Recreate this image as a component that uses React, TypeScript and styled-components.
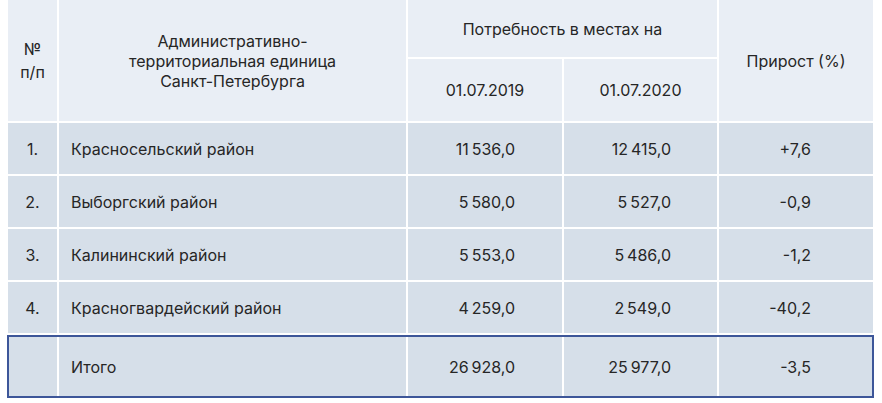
import React from "react";
import styled, { createGlobalStyle } from "styled-components";

const Global = createGlobalStyle`
  *, *::before, *::after { box-sizing: border-box; }
  html, body { margin: 0; padding: 0; background: #ffffff; }
  body { font-family: "Inter", "Noto Sans", Arial, sans-serif; }
`;

const COLS = "49px 347px 154px 153px 154px";

const Page = styled.div`
  padding: 0 0 0 8px;
  width: 873px;
`;

const Table = styled.div`
  display: flex;
  flex-direction: column;
  gap: 2px;
`;

const Head = styled.div`
  display: grid;
  grid-template-columns: ${COLS};
  grid-template-rows: 57px 62px;
  gap: 2px;
`;

const HeadCell = styled.div<{ $col: string; $row: string; $lh?: number }>`
  grid-column: ${(p) => p.$col};
  grid-row: ${(p) => p.$row};
  background: #e9eef5;
  color: #262626;
  font-family: "Inter", sans-serif;
  font-size: 16px;
  line-height: ${(p) => p.$lh ?? 20}px;
  display: flex;
  align-items: center;
  justify-content: center;
  text-align: center;
`;

const Row = styled.div<{ $h: number }>`
  display: grid;
  grid-template-columns: ${COLS};
  height: ${(p) => p.$h}px;
  column-gap: 2px;
`;

const TotalRow = styled(Row)`
  grid-template-columns: 48px 347px 154px 153px 153px;
  width: 867px;
  margin-left: -1px;
  border: 2px solid #3d5699;
  background: #ffffff;
`;

const Cell = styled.div<{ $align: "left" | "center" | "right"; $pr?: number }>`
  background: #d6dfe9;
  color: #262626;
  font-family: "Inter", sans-serif;
  font-size: 16px;
  display: flex;
  align-items: center;
  justify-content: ${(p) =>
    p.$align === "left" ? "flex-start" : p.$align === "right" ? "flex-end" : "center"};
  padding-left: ${(p) => (p.$align === "left" ? 12 : 0)}px;
  padding-right: ${(p) => p.$pr ?? 0}px;
  white-space: nowrap;
  padding-top: 1px;
`;

const NS = "\u2009";

const rows = [
  { n: "1.", name: "Красносельский район", a: `11${NS}536,0`, b: `12${NS}415,0`, d: "+7,6" },
  { n: "2.", name: "Выборгский район", a: `5${NS}580,0`, b: `5${NS}527,0`, d: "-0,9" },
  { n: "3.", name: "Калининский район", a: `5${NS}553,0`, b: `5${NS}486,0`, d: "-1,2" },
  { n: "4.", name: "Красногвардейский район", a: `4${NS}259,0`, b: `2${NS}549,0`, d: "-40,2" },
];

export default function App() {
  return (
    <Page>
      <Global />
      <Table>
        <Head>
          <HeadCell $col="1" $row="1 / span 2" $lh={23}>
            №
            <br />
            п/п
          </HeadCell>
          <HeadCell $col="2" $row="1 / span 2">
            Административно-
            <br />
            территориальная единица
            <br />
            Санкт-Петербурга
          </HeadCell>
          <HeadCell $col="3 / span 2" $row="1">Потребность в местах на</HeadCell>
          <HeadCell $col="5" $row="1 / span 2">Прирост (%)</HeadCell>
          <HeadCell $col="3" $row="2">01.07.2019</HeadCell>
          <HeadCell $col="4" $row="2">01.07.2020</HeadCell>
        </Head>
        {rows.map((r) => (
          <Row key={r.n} $h={51}>
            <Cell $align="center">{r.n}</Cell>
            <Cell $align="left">{r.name}</Cell>
            <Cell $align="right" $pr={47}>{r.a}</Cell>
            <Cell $align="right" $pr={46}>{r.b}</Cell>
            <Cell $align="right" $pr={62}>{r.d}</Cell>
          </Row>
        ))}
        <TotalRow $h={63}>
          <Cell $align="center"></Cell>
          <Cell $align="left">Итого</Cell>
          <Cell $align="right" $pr={47}>{`26${NS}928,0`}</Cell>
          <Cell $align="right" $pr={46}>{`25${NS}977,0`}</Cell>
          <Cell $align="right" $pr={61}>-3,5</Cell>
        </TotalRow>
      </Table>
    </Page>
  );
}
